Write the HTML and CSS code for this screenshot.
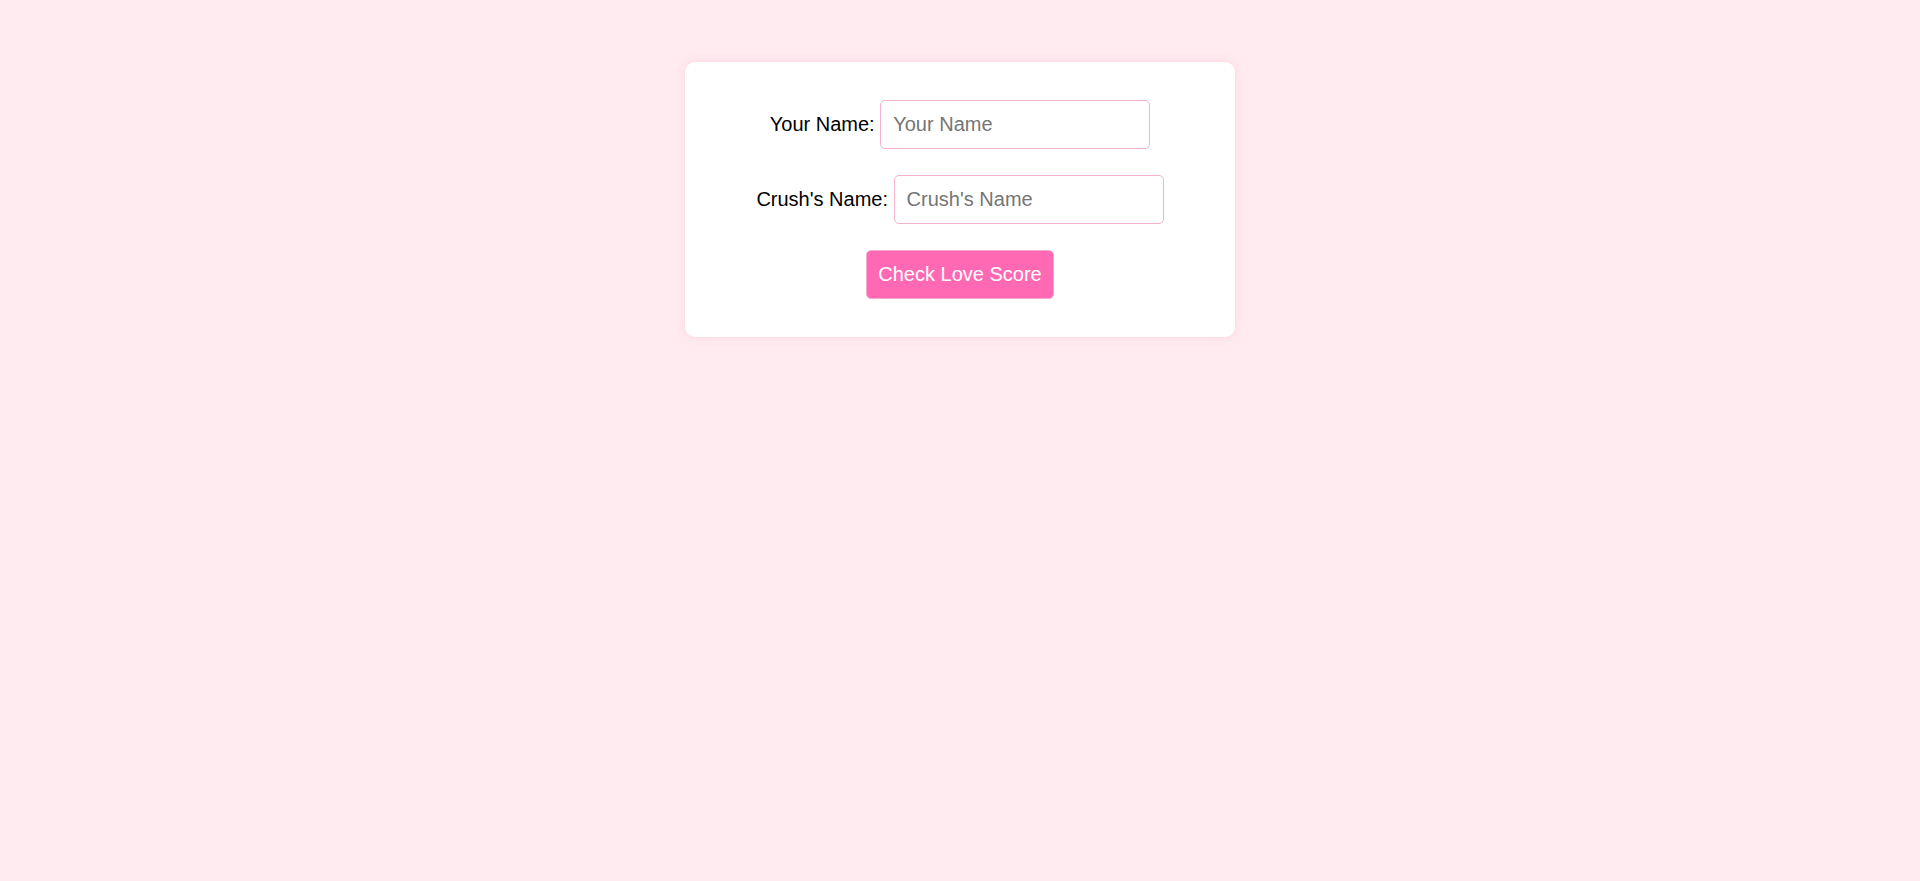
FILE: index.html
```html
<!DOCTYPE html>
<html lang="en">
<head>
<meta charset="utf-8">
<title>Love Calculator</title>
<link rel="stylesheet" href="styles.css">
</head>
<body>
<div class="card">
  <div class="row"><label for="you">Your Name:</label> <input id="you" type="text" placeholder="Your Name"></div>
  <div class="row"><label for="crush">Crush's Name:</label> <input id="crush" type="text" placeholder="Crush's Name"></div>
  <div class="row"><button type="button">Check Love Score</button></div>
</div>
</body>
</html>
```
FILE: styles.css
```css
html, body {
  margin: 0;
  padding: 0;
}
body {
  background: #ffebf0;
  font-family: "Liberation Sans", Arial, sans-serif;
  font-size: 20px;
  color: #000;
  min-height: 881px;
  padding-top: 62px;
  box-sizing: border-box;
}
.card {
  width: 550px;
  margin: 0 auto;
  box-sizing: border-box;
  background: #fff;
  border-radius: 10px;
  box-shadow: 0 0 10px rgba(255, 105, 180, 0.18);
  padding: 38px 20px;
  display: flex;
  flex-direction: column;
  gap: 26px;
}
.row {
  text-align: center;
  line-height: 23px;
  height: 49px;
}
label {
  font-size: 20px;
  vertical-align: middle;
}
input {
  font-family: inherit;
  font-size: 20px;
  width: 270px;
  height: 49px;
  box-sizing: border-box;
  padding: 12px;
  border: 1px solid #f3b3ce;
  border-radius: 5px;
  outline: none;
  vertical-align: middle;
  color: #000;
}
input::placeholder {
  color: #757575;
}
button {
  font-family: inherit;
  font-size: 20px;
  height: 49px;
  width: 188px;
  padding: 0;
  background: #ff69b4;
  color: #fff;
  border: 1px solid #f9a8cf;
  border-radius: 5px;
  cursor: pointer;
  vertical-align: middle;
}
```
